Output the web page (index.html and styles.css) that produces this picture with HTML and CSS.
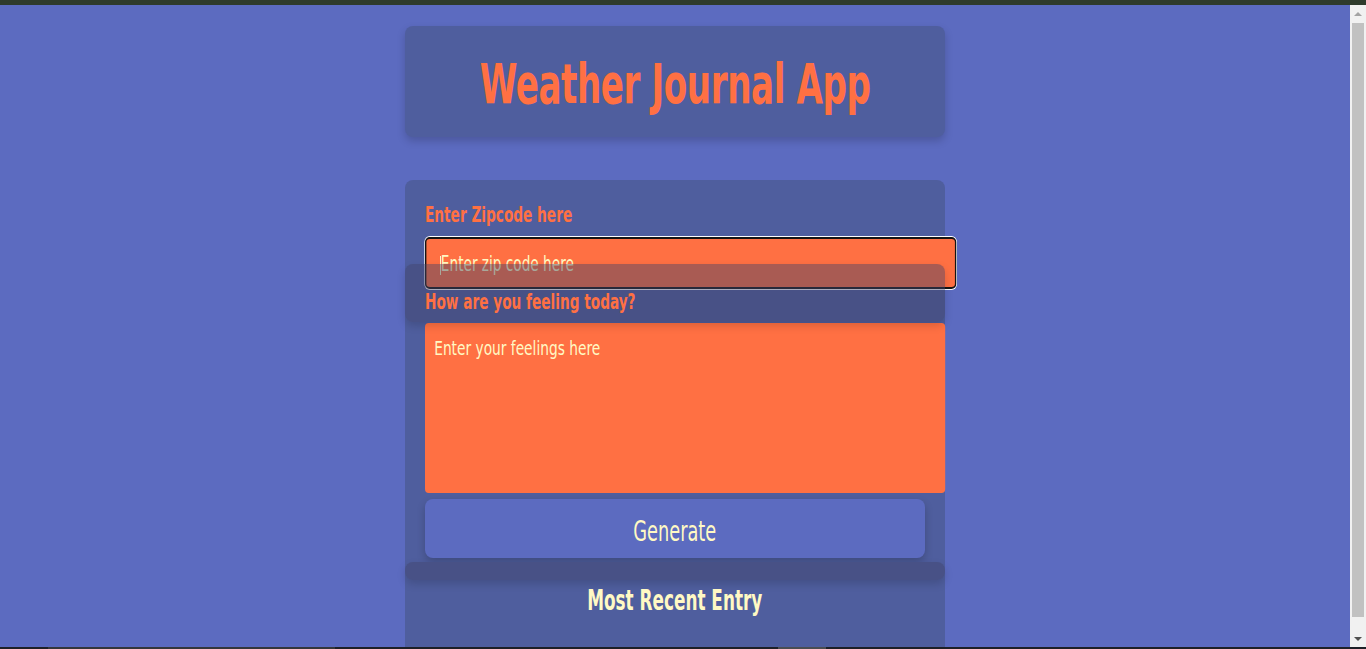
FILE: index.html
```html
<!DOCTYPE html>
<html lang="en">
<head>
<meta charset="utf-8">
<title>Weather Journal App</title>
<link rel="stylesheet" href="styles.css">
</head>
<body>
<div class="topbar"></div>
<div class="window">
  <div class="viewport">
    <main class="app">
      <header class="card title-card">
        <h1 class="title">Weather Journal App</h1>
      </header>
      <section class="card form-card">
        <div class="shade shade-mid"></div>
        <label class="label" for="zip">Enter Zipcode here</label>
        <div class="zip-wrap">
          <input class="zip" id="zip" type="text" placeholder="Enter zip code here">
          <span class="caret"></span>
        </div>
        <label class="label label-feel" for="feelings">How are you feeling today?</label>
        <textarea class="feelings" id="feelings" placeholder="Enter your feelings here"></textarea>
        <button class="generate" type="button"><span class="generate-text">Generate</span></button>
      </section>
      <section class="card entry-card">
        <div class="shade shade-top"></div>
        <h2 class="entry-title">Most Recent Entry</h2>
      </section>
    </main>
  </div>
  <div class="scrollbar">
    <div class="sb-btn"><span class="arrow arrow-up"></span></div>
    <div class="sb-track"><div class="sb-thumb"></div></div>
    <div class="sb-btn"><span class="arrow arrow-down"></span></div>
  </div>
</div>
<div class="bottombar">
  <span class="task task-a"></span>
  <span class="task task-b"></span>
</div>
</body>
</html>
```
FILE: styles.css
```css
html, body {
  margin: 0;
  padding: 0;
  height: 100%;
  overflow: hidden;
}
body {
  background: #5c6bc0;
  font-family: "DejaVu Sans Condensed", "Liberation Sans", sans-serif;
  display: flex;
  flex-direction: column;
}
.topbar {
  height: 5px;
  flex: none;
  background: #2f3b2c;
}
.window {
  height: 642px;
  flex: none;
  display: flex;
}
.bottombar {
  height: 2px;
  flex: none;
  background: #1d2027;
  display: flex;
}
.task {
  height: 2px;
}
.task-a {
  margin-left: 48px;
  width: 287px;
  background: #34373c;
}
.task-b {
  margin-left: 443px;
  width: 48px;
  background: #4a4d52;
}
.viewport {
  flex: 1;
  overflow: hidden;
  background: #5c6bc0;
}
.scrollbar {
  width: 16px;
  flex: none;
  background: #f1f1f1;
  display: flex;
  flex-direction: column;
}
.sb-btn {
  height: 17px;
  display: flex;
  align-items: center;
  justify-content: center;
}
.arrow {
  width: 0;
  height: 0;
  border-left: 4px solid transparent;
  border-right: 4px solid transparent;
}
.arrow-up {
  border-bottom: 4px solid #a3a3a3;
}
.arrow-down {
  border-top: 4px solid #505050;
}
.sb-track {
  flex: 1;
  padding: 1px 2px;
  display: flex;
  flex-direction: column;
}
.sb-thumb {
  height: 594px;
  background: #c1c1c1;
}
.app {
  width: 540px;
  margin: 0 auto;
  padding: 21px 0 0;
  display: flex;
  flex-direction: column;
}
.card {
  position: relative;
  background: #4f5e9e;
  border-radius: 8px;
  box-shadow: 0 4px 8px rgba(0, 0, 0, 0.18);
}
.title-card {
  height: 111px;
  box-sizing: border-box;
  padding-top: 4px;
  display: flex;
  align-items: center;
  justify-content: center;
}
.title {
  margin: 0;
  color: #ff7043;
  font-size: 55px;
  font-weight: 700;
  letter-spacing: -0.6px;
  white-space: nowrap;
  transform: scaleX(0.69);
}
.form-card {
  margin-top: 43px;
  padding: 22px 20px 4px;
  display: flex;
  flex-direction: column;
  align-items: flex-start;
  border-radius: 8px 8px 0 0;
  box-shadow: none;
}
.label {
  position: relative;
  z-index: 2;
  display: inline-block;
  color: #ff7043;
  font-size: 19px;
  font-weight: 700;
  line-height: 24px;
  white-space: nowrap;
  transform: scale(0.8, 1.1);
  transform-origin: left center;
}
.zip-wrap {
  position: relative;
  margin-top: 11px;
  height: 52px;
  width: 531px;
}
.zip {
  width: 770px;
  height: 52px;
  box-sizing: border-box;
  padding: 0 21px;
  background: #ff7043;
  border: 2px solid #141414;
  border-left-width: 2.9px;
  border-right-width: 2.9px;
  border-radius: 7px / 5px;
  box-shadow: 0 0 0 1px #ffffff;
  outline: none;
  font-family: inherit;
  font-size: 22px;
  color: #fff9c4;
  transform: scaleX(0.69);
  transform-origin: left center;
}
.caret {
  position: absolute;
  left: 15px;
  top: 19px;
  width: 1px;
  height: 19px;
  background: #fff9c4;
}
.zip::placeholder,
.feelings::placeholder {
  color: #fff9c4;
  opacity: 1;
}
.label-feel {
  margin-top: 0;
}
.feelings {
  margin-top: 10px;
  width: 680px;
  height: 170px;
  box-sizing: border-box;
  padding: 13px 12px;
  background: #ff7043;
  border: none;
  border-radius: 5px / 4px;
  resize: none;
  font-family: inherit;
  font-size: 20px;
  color: #fff9c4;
  transform: scaleX(0.765);
  transform-origin: left center;
}
.generate {
  margin-top: 6px;
  width: 500px;
  height: 59px;
  padding: 4px 0 0;
  background: #5c6bc0;
  border: none;
  border-radius: 8px;
  box-shadow: 0 4px 8px rgba(0, 0, 0, 0.2);
  font-family: inherit;
  color: #fff9c4;
  display: flex;
  align-items: center;
  justify-content: center;
}
.generate-text {
  display: inline-block;
  font-size: 27px;
  white-space: nowrap;
  transform: scale(0.73, 1.08);
}
.shade {
  position: absolute;
  left: 0;
  right: 0;
  z-index: 1;
  background: rgba(64, 66, 104, 0.45);
  border-radius: 8px;
  box-shadow: 0 4px 8px rgba(0, 0, 0, 0.15);
  pointer-events: none;
}
.shade-mid {
  top: 84px;
  height: 58px;
}
.shade-top {
  top: 0;
  height: 18px;
}
.entry-card {
  border-radius: 0;
  box-shadow: none;
  height: 120px;
  display: flex;
  flex-direction: column;
  align-items: center;
}
.entry-title {
  position: relative;
  z-index: 2;
  margin: 24px 0 0;
  color: #fff9c4;
  font-size: 25px;
  font-weight: 700;
  white-space: nowrap;
  transform: scale(0.75, 1.1);
}
```
